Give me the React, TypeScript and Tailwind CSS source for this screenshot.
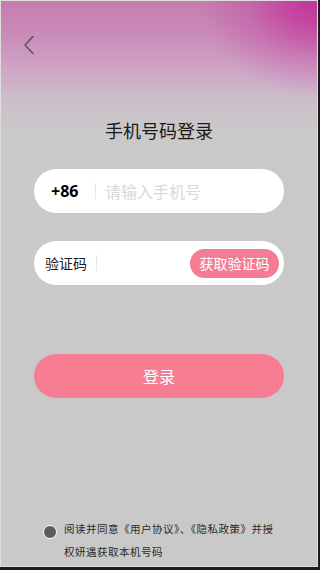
import React from "react";

export default function App() {
  return (
    <div className="w-[320px] h-[570px] bg-[#1c1c1c] overflow-hidden">
      <div
        className="relative w-[318px] h-[567px] border border-[#dedede] bg-[#c9c9c9] bg-[radial-gradient(ellipse_115px_95px_at_100%_0%,#c2339b_0%,rgba(194,51,155,0.75)_25%,rgba(194,51,155,0.3)_60%,rgba(194,51,155,0)_100%),linear-gradient(180deg,#c67caf_0px,#c98cb8_35px,#cfa9c7_72px,#cbc0ca_102px,#c9c9c9_130px)] flex flex-col"
        style={{ fontFamily: '"Noto Sans CJK SC", "Noto Sans", sans-serif' }}
      >
        <div className="h-[88px] pl-[22px] pt-[34px]">
          <svg width="12" height="20" viewBox="0 0 12 20" fill="none">
            <path d="M10 1.5 L2 10 L10 18.5" stroke="#5e5560" strokeWidth="1.6" strokeLinecap="round" strokeLinejoin="round" />
          </svg>
        </div>
        <div className="text-center text-[18px] leading-[26px] text-[#1a1a1a] mt-[28px]">手机号码登录</div>
        <div className="mx-[33px] mt-[26px] h-[44px] rounded-full bg-white flex items-center">
          <span className="ml-[17px] w-[44px] text-[16px] font-bold text-black" style={{ fontFamily: '"Noto Sans", sans-serif' }}>+86</span>
          <span className="w-px h-[16px] bg-[#e6e6e6]" />
          <span className="ml-[9px] text-[16px] text-[#d8d8d8]">请输入手机号</span>
        </div>
        <div className="mx-[33px] mt-[28px] h-[44px] rounded-full bg-white flex items-center">
          <span className="ml-[11px] w-[51px] text-[14px] text-[#1a1a1a]">验证码</span>
          <span className="w-px h-[16px] bg-[#e6e6e6]" />
          <span className="ml-auto mr-[5px] h-[29px] w-[89px] rounded-full bg-[#f47d93] flex items-center justify-center text-[14px] text-white">获取验证码</span>
        </div>
        <div className="mx-[33px] mt-[69px] h-[44px] rounded-full bg-[#f77e92] flex items-center justify-center text-[16px] text-white">登录</div>
        <div className="mt-auto mb-[3px] ml-[42px] mr-[20px] flex items-start">
          <span className="mt-[8px] w-[14px] h-[14px] rounded-full bg-[#5c5c5c] border border-white shrink-0" />
          <p className="ml-[7px] text-[10.5px] leading-[23px] tracking-[0.5px] text-[#2a2a2a] whitespace-nowrap">
            阅读并同意《用户协议》、《隐私政策》并授
            <br />
            权妍遇获取本机号码
          </p>
        </div>
      </div>
    </div>
  );
}
